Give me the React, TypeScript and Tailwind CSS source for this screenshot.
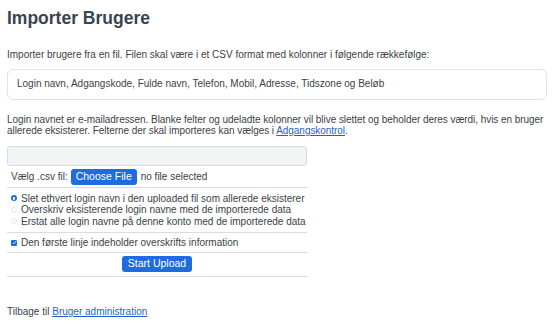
export default function App() {
  return (
    <div className="min-h-screen w-[560px] bg-white px-[7px] pt-[8px] text-[10px] leading-[11.5px] text-[#3b3f46] [font-family:'Liberation_Sans',Arial,sans-serif]">
      <h1 className="text-[17.5px] font-bold leading-[20px] text-[#3c4350]">Importer Brugere</h1>

      <p className="mt-[21px]">
        Importer brugere fra en fil. Filen skal være i et CSV format med kolonner i følgende rækkefølge:
      </p>

      <div className="mt-[8px] flex h-[31px] w-[540px] items-center rounded-[6px] border border-[#e2e3e5] px-[9px]">
        Login navn, Adgangskode, Fulde navn, Telefon, Mobil, Adresse, Tidszone og Beløb
      </div>

      <p className="mt-[14px] w-[553px] tracking-[-0.05px]">
        Login navnet er e-mailadressen. Blanke felter og udeladte kolonner vil blive slettet og beholder deres værdi, hvis en bruger allerede eksisterer. Felterne der skal importeres kan vælges i{' '}
        <a href="#" className="text-[#1f5fc9] underline">Adgangskontrol</a>.
      </p>

      <form className="mt-[9px] w-[300px]" onSubmit={(e) => e.preventDefault()}>
        <div className="h-[20px] rounded-[3px] border border-[#dadce0] bg-[#f3f4f6]" />

        <div className="flex h-[22px] items-center gap-[3px] border-b border-[#dcdcdc] pl-[4px] pt-[1px]">
          <span>Vælg .csv fil:</span>
          <span className="flex h-[16px] items-center rounded-[3px] bg-[#1d6ce0] px-[5px] text-[10.5px] text-white">Choose File</span>
          <span className="ml-[1px]">no file selected</span>
        </div>

        <div className="flex flex-col whitespace-nowrap border-b border-[#dcdcdc] pb-[5px] pl-[4px] pt-[5px]">
          {[
            'Slet ethvert login navn i den uploaded fil som allerede eksisterer',
            'Overskriv eksisterende login navne med de importerede data',
            'Erstat alle login navne på denne konto med de importerede data',
          ].map((t, i) => (
            <label key={t} className="flex h-[11.5px] items-center gap-[4px]">
              <span
                className={
                  i === 0
                    ? 'flex h-[6px] w-[6px] shrink-0 items-center justify-center rounded-full bg-[#1d6ce0]'
                    : 'h-[6px] w-[6px] shrink-0 rounded-full border border-[#e6e6e6] bg-white'
                }
              >
                {i === 0 && <span className="h-[2.5px] w-[2.5px] rounded-full bg-white" />}
              </span>
              <span>{t}</span>
            </label>
          ))}
        </div>

        <label className="flex h-[20px] items-center gap-[4px] whitespace-nowrap border-b border-[#dcdcdc] pl-[4px]">
          <span className="flex h-[6px] w-[6px] shrink-0 items-center justify-center rounded-[1px] bg-[#1d6ce0]">
            <svg viewBox="0 0 8 8" className="h-[5px] w-[5px]">
              <path d="M1.5 4.2 L3.2 5.8 L6.5 2" fill="none" stroke="white" strokeWidth="1.4" />
            </svg>
          </span>
          <span>Den første linje indeholder overskrifts information</span>
        </label>

        <div className="flex h-[24px] items-center justify-center border-b border-[#dcdcdc] pb-[1px]">
          <button type="submit" className="flex h-[16px] items-center rounded-[3px] bg-[#1d6ce0] px-[6px] text-[10.5px] font-medium text-white">
            Start Upload
          </button>
        </div>
      </form>

      <p className="mt-[29px]">
        Tilbage til <a href="#" className="text-[#1f5fc9] underline">Bruger administration</a>
      </p>
    </div>
  );
}
